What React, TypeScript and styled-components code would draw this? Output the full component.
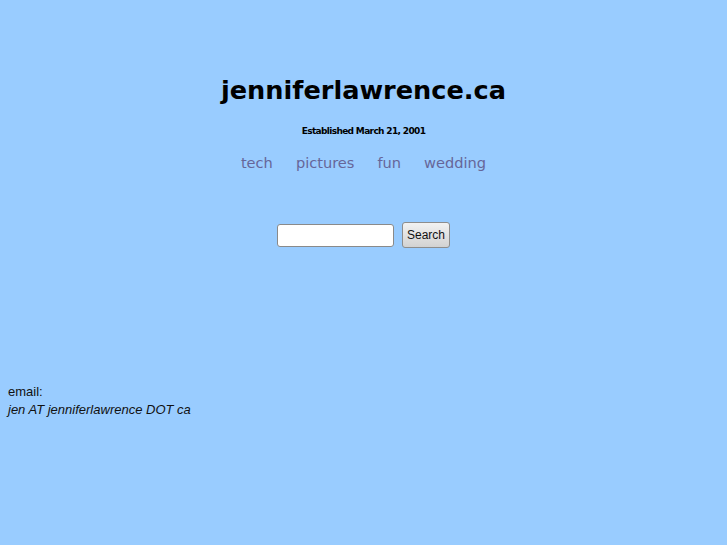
import React from "react";
import styled, { createGlobalStyle } from "styled-components";

const Global = createGlobalStyle`
  html, body { margin: 0; padding: 0; background: #99ccff; }
  body { font-family: "Liberation Sans", Arial, sans-serif; font-size: 13px; color: #111; }
`;

const Page = styled.div`
  width: 727px;
  height: 545px;
  display: flex;
  flex-direction: column;
`;

const Header = styled.div`
  display: flex;
  flex-direction: column;
  align-items: center;
  padding-top: 73px;
`;

const Title = styled.h1`
  margin: 0;
  font-family: "DejaVu Sans", sans-serif;
  font-weight: bold;
  font-size: 25.6px;
  line-height: 34px;
  color: #000;
`;

const Established = styled.div`
  margin-top: 18px;
  font-family: "DejaVu Sans", sans-serif;
  font-weight: bold;
  font-size: 9px;
  letter-spacing: -0.65px;
  line-height: 12px;
  color: #000;
`;

const Nav = styled.nav`
  margin-top: 16px;
  display: flex;
  gap: 23px;
`;

const NavLink = styled.a`
  font-family: "DejaVu Sans", sans-serif;
  font-size: 14.6px;
  line-height: 20px;
  color: #666699;
  text-decoration: none;
`;

const SearchForm = styled.form`
  margin-top: 49px;
  display: flex;
  align-items: center;
  justify-content: center;
  gap: 8px;
`;

const SearchInput = styled.input`
  box-sizing: border-box;
  width: 117px;
  height: 23px;
  border: 1px solid #8a8a8a;
  border-radius: 3px;
  background: #fff;
  margin: 0;
  padding: 0 4px;
`;

const SearchButton = styled.button`
  box-sizing: border-box;
  width: 48px;
  height: 26px;
  border: 1px solid #8d8d8d;
  border-radius: 3px;
  background: linear-gradient(#f2f2f2, #d2d2d2);
  font-family: "Liberation Sans", Arial, sans-serif;
  font-size: 12px;
  color: #111;
  margin: 0;
  padding: 0;
`;

const Contact = styled.div`
  margin-top: 135px;
  padding-left: 8px;
  line-height: 18px;
`;

const Email = styled.em`
  font-style: italic;
`;

export default function App() {
  return (
    <>
      <Global />
      <Page>
        <Header>
          <Title>jenniferlawrence.ca</Title>
          <Established>Established March 21, 2001</Established>
          <Nav>
            <NavLink href="#">tech</NavLink>
            <NavLink href="#">pictures</NavLink>
            <NavLink href="#">fun</NavLink>
            <NavLink href="#">wedding</NavLink>
          </Nav>
        </Header>
        <SearchForm onSubmit={(e) => e.preventDefault()}>
          <SearchInput type="text" />
          <SearchButton type="submit">Search</SearchButton>
        </SearchForm>
        <Contact>
          <div>email:</div>
          <Email>jen AT jenniferlawrence DOT ca</Email>
        </Contact>
      </Page>
    </>
  );
}
